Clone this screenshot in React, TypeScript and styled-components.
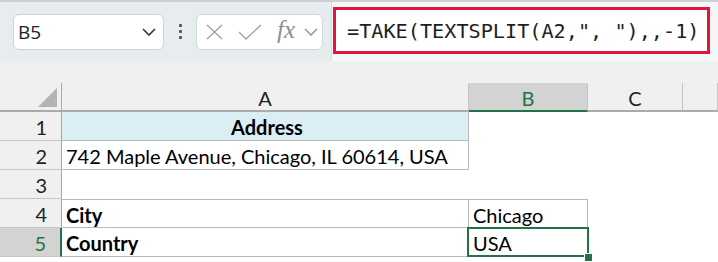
import styled, { createGlobalStyle } from "styled-components"

const GlobalStyle = createGlobalStyle`
  body {
    margin: 0;
    background: #ffffff;
  }
`

const GREEN = "#217346"
const GRID_LINE = "#b9b9b9"

const Page = styled.div`
  width: 718px;
  height: 262px;
  overflow: hidden;
  background: #ffffff;
  font-family: Lato, "Open Sans", sans-serif;
`

const Toolbar = styled.div`
  height: 59px;
  border-top: 2px solid #cbd0d4;
  background: #e7ecef;
  display: flex;
  align-items: center;
  padding-left: 13px;
  box-sizing: content-box;
`

const NameBox = styled.div`
  width: 151px;
  height: 36px;
  box-sizing: border-box;
  background: #ffffff;
  border: 1px solid #cfd3d6;
  border-radius: 6px;
  display: flex;
  align-items: center;
  justify-content: space-between;
  padding: 0 7px 0 4px;
  font-family: "Open Sans", sans-serif;
  font-size: 19px;
  color: #222;
`

const Dots = styled.div`
  width: 32px;
  display: flex;
  flex-direction: column;
  align-items: center;
  gap: 3px;

  span {
    width: 3px;
    height: 3px;
    background: #555;
    border-radius: 1px;
  }
`

const FuncBox = styled.div`
  width: 127px;
  height: 36px;
  box-sizing: border-box;
  background: #ffffff;
  border: 1px solid #d3d7da;
  border-radius: 6px;
  display: flex;
  align-items: center;
  padding-left: 9px;
  gap: 15px;
`

const Fx = styled.span`
  font-family: "Liberation Serif", serif;
  font-style: italic;
  font-size: 25px;
  color: #8f8f8f;
  margin-top: -4px;
  display: flex;
  align-items: center;
  gap: 9px;

  svg {
    margin-top: 5px;
  }
`

const FormulaArea = styled.div`
  flex: 1;
  align-self: stretch;
  margin-left: 8px;
  border-left: 1px solid #d8dcdf;
  background: #f4f6f7;
  padding: 5px 8px 7px 1px;
  display: flex;
`

const FormulaBox = styled.div`
  flex: 1;
  border: 3px solid #e0163f;
  background: #ffffff;
  display: flex;
  align-items: center;
  padding-left: 11px;
  font-family: "DejaVu Sans Mono", monospace;
  font-size: 20.2px;
  color: #1e1e1e;
  white-space: pre;
`

const Band = styled.div`
  height: 22px;
  background: #f0f0f0;
`

const Sheet = styled.div`
  display: grid;
  grid-template-columns: 62px 407px 119px 95px 1fr;
  grid-auto-rows: 29px;
`

const Corner = styled.div`
  background: #f0f0f0;
  border-right: 1px solid #a8a8a8;
  border-bottom: 2px solid #ababab;
  box-sizing: border-box;
  display: flex;
  align-items: flex-end;
  justify-content: flex-end;
  padding: 0 4px 3px 0;

  &::after {
    content: "";
    width: 19px;
    height: 19px;
    background: #b3b3b3;
    clip-path: polygon(100% 0, 100% 100%, 0 100%);
  }
`

const ColHeader = styled.div<{ $active?: boolean }>`
  background: ${(p) => (p.$active ? "#d3d3d3" : "#f0f0f0")};
  color: ${(p) => (p.$active ? GREEN : "#1f1f1f")};
  border-bottom: 2px solid ${(p) => (p.$active ? GREEN : "#ababab")};
  border-right: 1px solid #c4c4c4;
  box-sizing: border-box;
  display: flex;
  align-items: center;
  justify-content: center;
  padding-top: 3px;
  font-size: 20px;
`

const RowHeader = styled.div<{ $active?: boolean }>`
  background: ${(p) => (p.$active ? "#d3d3d3" : "#f0f0f0")};
  color: ${(p) => (p.$active ? GREEN : "#1f1f1f")};
  border-right: ${(p) => (p.$active ? `2px solid ${GREEN}` : "1px solid #a8a8a8")};
  border-bottom: 1px solid #c6c6c6;
  box-sizing: border-box;
  display: flex;
  align-items: center;
  justify-content: flex-end;
  padding: 2px 14px 0 0;
  font-size: 20px;
`

const Cell = styled.div<{
  $fill?: string
  $top?: boolean
  $right?: boolean
  $bottom?: boolean
  $bold?: boolean
  $center?: boolean
  $selected?: boolean
}>`
  position: relative;
  z-index: ${(p) => (p.$selected ? 2 : "auto")};
  background: ${(p) => p.$fill || "#ffffff"};
  box-sizing: border-box;
  border-top: ${(p) => (p.$top ? `1px solid ${GRID_LINE}` : "none")};
  border-right: ${(p) => (p.$right ? `1px solid ${GRID_LINE}` : "none")};
  border-bottom: ${(p) => (p.$bottom ? `1px solid ${GRID_LINE}` : "none")};
  display: flex;
  align-items: center;
  justify-content: ${(p) => (p.$center ? "center" : "flex-start")};
  padding: 2px 0 0 4px;
  font-size: 20px;
  font-weight: ${(p) => (p.$bold ? 700 : 400)};
  color: #000;
  white-space: nowrap;
`

const Selection = styled.div`
  position: absolute;
  top: -1px;
  left: -2px;
  right: -2px;
  bottom: -1px;
  border: 2px solid ${GREEN};
  pointer-events: none;
`

const FillHandle = styled.div`
  position: absolute;
  right: -5px;
  bottom: -5px;
  width: 7px;
  height: 7px;
  background: ${GREEN};
  box-shadow: -1px -1px 0 0 #ffffff;
`

const Chevron = ({ color }: { color: string }) => (
  <svg width="14" height="8" viewBox="0 0 14 8">
    <polyline points="1,1 7,7 13,1" fill="none" stroke={color} strokeWidth="1.6" />
  </svg>
)

export default function App() {
  return (
    <Page>
      <GlobalStyle />
      <Toolbar>
        <NameBox>
          <span>B5</span>
          <Chevron color="#333" />
        </NameBox>
        <Dots>
          <span />
          <span />
          <span />
        </Dots>
        <FuncBox>
          <svg width="17" height="16" viewBox="0 0 17 16">
            <path d="M1 1 L16 15 M16 1 L1 15" stroke="#a3a3a3" strokeWidth="1.4" fill="none" />
          </svg>
          <svg width="24" height="16" viewBox="0 0 24 16">
            <polyline points="1,8 8,15 23,1" stroke="#a3a3a3" strokeWidth="1.4" fill="none" />
          </svg>
          <Fx>
            fx
            <Chevron color="#9a9a9a" />
          </Fx>
        </FuncBox>
        <FormulaArea>
          <FormulaBox>=TAKE(TEXTSPLIT(A2,", "),,-1)</FormulaBox>
        </FormulaArea>
      </Toolbar>
      <Band />
      <Sheet>
        <Corner />
        <ColHeader>A</ColHeader>
        <ColHeader $active>B</ColHeader>
        <ColHeader>C</ColHeader>
        <ColHeader />

        <RowHeader>1</RowHeader>
        <Cell $fill="#daeef3" $right $bottom $bold $center>Address</Cell>
        <Cell />
        <Cell />
        <Cell />

        <RowHeader>2</RowHeader>
        <Cell $right $bottom>742 Maple Avenue, Chicago, IL 60614, USA</Cell>
        <Cell />
        <Cell />
        <Cell />

        <RowHeader>3</RowHeader>
        <Cell />
        <Cell />
        <Cell />
        <Cell />

        <RowHeader>4</RowHeader>
        <Cell $top $right $bottom $bold>City</Cell>
        <Cell $top $right $bottom>Chicago</Cell>
        <Cell />
        <Cell />

        <RowHeader $active>5</RowHeader>
        <Cell $right $bottom $bold>Country</Cell>
        <Cell $right $bottom $selected>
          USA
          <Selection />
          <FillHandle />
        </Cell>
        <Cell />
        <Cell />
      </Sheet>
    </Page>
  )
}
